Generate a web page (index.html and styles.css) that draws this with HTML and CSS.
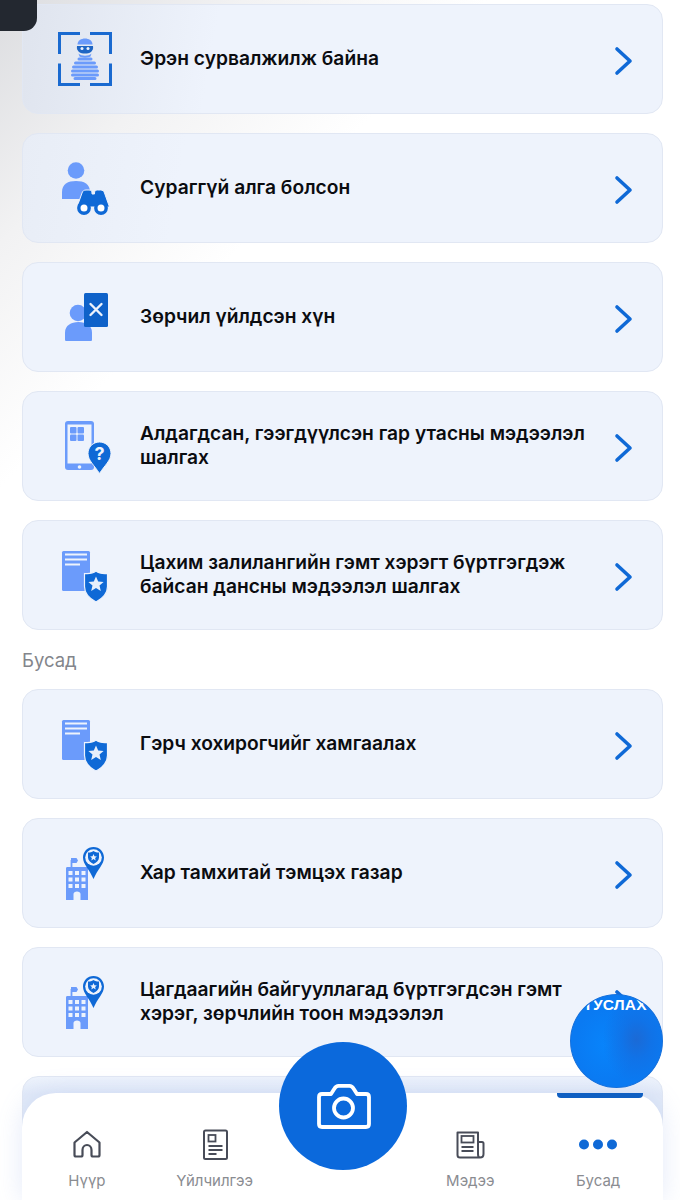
FILE: index.html
```html
<!DOCTYPE html>
<html>
<head>
    <title>Бусад</title>
    <meta charset="UTF-8">
    <link rel="stylesheet" href="styles.css">
</head>
<body>
    <svg class="defs" width="0" height="0">
        <symbol id="chevron" viewBox="0 0 20 30">
            <path d="M3 3 L16 15 L3 27" fill="none" stroke="#0f69d6" stroke-width="3.6" stroke-linecap="round" stroke-linejoin="round"/>
        </symbol>
        <symbol id="doc-shield" viewBox="0 0 56 56">
            <rect x="4" y="4" width="28" height="40" rx="1.500" fill="#6b9bfb"/>
            <path d="M7 7.500h22M7 12.500h22M7 17.500h15" stroke="#eef3fc" stroke-width="2"/>
            <path d="M38 24c2.500 2 6 3 11.500 2.500v13c0 7-5 12-11.500 15.500c-6.500-3.500-11.500-8.500-11.500-15.500v-13c5 .5 9-.5 11.500-2.500z" fill="#0f69d6" stroke="#eef3fc" stroke-width="1.200"/>
            <path d="M38 29.500l2.200 5 5.400 .5-4.100 3.600 1.300 5.400-4.800-2.900-4.800 2.900 1.300-5.400-4.100-3.600 5.400-.5z" fill="#e8effb"/>
        </symbol>
        <symbol id="building-pin" viewBox="0 0 56 56">
            <path d="M13.500 22v-7" stroke="#6b9bfb" stroke-width="1.800"/>
            <path d="M13 13h5.500l1.500 2.500-1.500 2.500h-5.500z" fill="#6b9bfb"/>
            <path d="M8 23.500c0-1 .5-1.500 1.500-1.500h19c1 0 1.500 .5 1.500 1.500V55h-7.500v-6c0-1.500-1.500-2.500-3.500-2.500s-3.500 1-3.500 2.500v6H8z" fill="#6b9bfb"/>
            <path d="M10.500 26h4v4h-4zM17 26h4v4h-4zM23.500 26h4v4h-4zM10.500 32.500h4v4h-4zM17 32.500h4v4h-4zM23.500 32.500h4v4h-4zM10.500 39h4v4h-4zM17 39h4v4h-4zM23.500 39h4v4h-4z" fill="#eef3fc"/>
            <path d="M35.500 2c6 0 10.500 4.800 10.500 10.500 0 7-6.500 12-10.500 21.500-4-9.500-10.500-14.500-10.500-21.500C25 6.800 29.500 2 35.500 2z" fill="#0f69d6"/>
            <circle cx="35.500" cy="12.500" r="8.300" fill="#eef3fc"/>
            <path d="M35.500 6c2 1.300 3.800 1.600 5.500 1.500v5c0 3-2.500 5-5.500 6.500-3-1.500-5.500-3.500-5.500-6.500v-5c1.700 .1 3.500-.2 5.500-1.500z" fill="#0f69d6"/>
            <path d="M35.500 9l1 2.200 2.400 .2-1.800 1.600 .6 2.400-2.200-1.300-2.200 1.300 .6-2.400-1.800-1.600 2.400-.2z" fill="#eef3fc"/>
        </symbol>
    </svg>

    <main class="content">
        <a class="card">
            <span class="card-icon">
                <svg width="56" height="56" viewBox="0 0 56 56">
                    <path d="M22 2.500H1.500V23M32 2.500h20.500V23M1.500 32.500V53.500H22M52.500 32.500V53.500H32" fill="none" stroke="#1a6ad0" stroke-width="3"/>
                    <path d="M19.500 13.500c0-8 15-8 15 0z" fill="#6b9bfb"/>
                    <path d="M19 15h16c.5 3-.5 4.500-2 6-3 2-9 2-12 0-1.500-1.500-2.500-3-2-6z" fill="#1f66c4"/>
                    <path d="M20.500 22.500c3 3 10 3 13 0l-1 3c-3 1.500-8 1.500-11 0z" fill="#6b9bfb"/>
                    <circle cx="24" cy="17.500" r="1.500" fill="#eef3fc"/>
                    <circle cx="30" cy="17.500" r="1.500" fill="#eef3fc"/>
                    <path d="M21 28h12M17.500 32h19M15.500 36h23M14.500 40h25M14.500 44h25M17 47.500h20" stroke="#6b9bfb" stroke-width="3" stroke-linecap="round"/>
                </svg>
            </span>
            <span class="card-title">Эрэн сурвалжилж байна</span>
            <svg class="chevron"><use href="#chevron"/></svg>
        </a>
        <a class="card">
            <span class="card-icon">
                <svg width="56" height="56" viewBox="0 0 56 56">
                    <circle cx="18" cy="10.500" r="8.300" fill="#6b9bfb"/>
                    <path d="M4 39v-7c0-8 6-11 14-11s14 3 14 11v7z" fill="#6b9bfb"/>
                    <path d="M19 47l5-14c.5-2 2-3 4-3h3c2 0 3 1 3 3v1h2.500v-1c0-2 1-3 3-3h3c2 0 3.500 1 4 3l5 14z" fill="#0f69d6" stroke="#eef3fc" stroke-width="1"/>
                    <circle cx="26" cy="48" r="5.200" fill="#fff" stroke="#0f69d6" stroke-width="3.400"/>
                    <circle cx="43" cy="48" r="5.200" fill="#fff" stroke="#0f69d6" stroke-width="3.400"/>
                </svg>
            </span>
            <span class="card-title">Сураггүй алга болсон</span>
            <svg class="chevron"><use href="#chevron"/></svg>
        </a>
        <a class="card">
            <span class="card-icon">
                <svg width="56" height="56" viewBox="0 0 56 56">
                    <circle cx="20" cy="24" r="8.300" fill="#6b9bfb"/>
                    <path d="M8.500 52c-1 0-1.500-.5-1.500-1.500v-7c0-7 6-10.500 13.500-10.500S34 36.500 34 43.500v7c0 1-.5 1.500-1.500 1.500z" fill="#6b9bfb"/>
                    <rect x="26" y="4" width="24" height="34" rx="1.500" fill="#0f62c9"/>
                    <path d="M32.500 15.500l11 11M43.500 15.500l-11 11" stroke="#eef3fc" stroke-width="2.400" stroke-linecap="round" transform="translate(0 -.5)"/>
                </svg>
            </span>
            <span class="card-title">Зөрчил үйлдсэн хүн</span>
            <svg class="chevron"><use href="#chevron"/></svg>
        </a>
        <a class="card">
            <span class="card-icon">
                <svg width="56" height="56" viewBox="0 0 56 56">
                    <rect x="7" y="3" width="29" height="49" rx="3" fill="#6b9bfb"/>
                    <rect x="9.500" y="6.500" width="24" height="39" fill="#eef3fc"/>
                    <rect x="12" y="9" width="6.500" height="6.500" rx="1" fill="#6b9bfb"/>
                    <rect x="19.500" y="9" width="6.500" height="6.500" rx="1" fill="#6b9bfb"/>
                    <rect x="12" y="16.500" width="6.500" height="6.500" rx="1" fill="#6b9bfb"/>
                    <rect x="19.500" y="16.500" width="6.500" height="6.500" rx="1" fill="#6b9bfb"/>
                    <circle cx="21.500" cy="49" r="1.800" fill="#eef3fc"/>
                    <path d="M41.500 24c6.500 0 11.500 5 11.500 11.500 0 7-6.500 12-11.500 20-5-8-11.500-13-11.500-20C30 29 35 24 41.500 24z" fill="#0f69d6" stroke="#eef3fc" stroke-width="1"/>
                    <text x="41.500" y="42" class="icon-mark">?</text>
                </svg>
            </span>
            <span class="card-title">Алдагдсан, гээгдүүлсэн гар утасны мэдээлэл шалгах</span>
            <svg class="chevron"><use href="#chevron"/></svg>
        </a>
        <a class="card">
            <span class="card-icon"><svg width="56" height="56"><use href="#doc-shield"/></svg></span>
            <span class="card-title">Цахим залилангийн гэмт хэрэгт бүртгэгдэж байсан дансны мэдээлэл шалгах</span>
            <svg class="chevron"><use href="#chevron"/></svg>
        </a>

        <div class="section-label">Бусад</div>

        <a class="card">
            <span class="card-icon"><svg width="56" height="56"><use href="#doc-shield"/></svg></span>
            <span class="card-title">Гэрч хохирогчийг хамгаалах</span>
            <svg class="chevron"><use href="#chevron"/></svg>
        </a>
        <a class="card">
            <span class="card-icon"><svg width="56" height="56"><use href="#building-pin"/></svg></span>
            <span class="card-title">Хар тамхитай тэмцэх газар</span>
            <svg class="chevron"><use href="#chevron"/></svg>
        </a>
        <a class="card">
            <span class="card-icon"><svg width="56" height="56"><use href="#building-pin"/></svg></span>
            <span class="card-title">Цагдаагийн байгууллагад бүртгэгдсэн гэмт хэрэг, зөрчлийн тоон мэдээлэл</span>
            <svg class="chevron"><use href="#chevron"/></svg>
        </a>
        <a class="card card-behind"></a>
    </main>

    <div class="corner"></div>

    <nav class="tabbar">
        <div class="tab-marker"></div>
        <a class="tab">
            <svg width="32" height="32" viewBox="0 0 32 32">
                <path d="M3.500 26V13.500L16 3l12.500 10.500V26c0 1-.5 1.500-1.500 1.500h-5c-1 0-1.500-.5-1.500-1.500v-5c0-3-2-5-4.500-5s-4.500 2-4.500 5v5c0 1-.5 1.500-1.500 1.500H5c-1 0-1.500-.5-1.500-1.500z" fill="none" stroke="#484c58" stroke-width="2.200" stroke-linejoin="round"/>
            </svg>
            <span>Нүүр</span>
        </a>
        <a class="tab">
            <svg width="32" height="32" viewBox="0 0 32 32">
                <rect x="5" y="1.500" width="23" height="28.500" rx="1.500" fill="none" stroke="#484c58" stroke-width="2"/>
                <rect x="9.500" y="6" width="7" height="6.500" fill="none" stroke="#484c58" stroke-width="1.800"/>
                <path d="M9.500 17h14M9.500 21h14M9.500 25h8" stroke="#484c58" stroke-width="1.800"/>
            </svg>
            <span>Үйлчилгээ</span>
        </a>
        <div class="tab tab-gap"></div>
        <a class="tab">
            <svg width="32" height="32" viewBox="0 0 32 32">
                <path d="M24 13h4c1 0 1.500 .5 1.500 1.500V25c0 2-1.500 3.500-3.500 3.500H6c-1.500 0-2.500-1-2.500-2.500V3.500H24V25c0 2 .5 3.500 2 3.500" fill="none" stroke="#484c58" stroke-width="2" stroke-linejoin="round"/>
                <rect x="7.500" y="7" width="12" height="6.500" fill="none" stroke="#484c58" stroke-width="1.800"/>
                <path d="M7.500 18h12M7.500 22h12" stroke="#484c58" stroke-width="1.800"/>
            </svg>
            <span>Мэдээ</span>
        </a>
        <a class="tab">
            <svg width="40" height="32" viewBox="0 0 40 32">
                <circle cx="6" cy="15.500" r="5" fill="#0f69d6"/>
                <circle cx="20" cy="15.500" r="5" fill="#0f69d6"/>
                <circle cx="34" cy="15.500" r="5" fill="#0f69d6"/>
            </svg>
            <span>Бусад</span>
        </a>
    </nav>

    <button class="camera-btn">
        <svg width="56" height="48" viewBox="0 0 56 48">
            <path d="M7 12h9l3.500-5.500c1-1.700 2-2.600 4-2.600h11c2 0 3 .9 4 2.600L42 12h9c2 0 3 1 3 3v27c0 2-1 3-3 3H7c-2 0-3-1-3-3V15c0-2 1-3 3-3z" fill="none" stroke="#fff" stroke-width="3.800" stroke-linejoin="round"/>
            <circle cx="28.500" cy="26" r="9.500" fill="none" stroke="#fff" stroke-width="3.800"/>
        </svg>
    </button>

    <div class="help-ball"><span>ТУСЛАХ</span></div>
</body>
</html>
```

FILE: styles.css
```css
* { box-sizing: border-box; }
html, body { margin: 0; height: 1200px; overflow: hidden; }
body {
    position: relative;
    font-family: Inter, "Noto Sans", sans-serif;
    background: linear-gradient(135deg, #dcdde0 0, #f2f2f3 13%, #ffffff 26%);
}
.defs { position: absolute; }

.corner {
    position: absolute;
    left: 0;
    top: 0;
    width: 37px;
    height: 31px;
    background: #232830;
    border-radius: 0 0 13px 0;
}

.content { padding: 4px 17px 0 22px; display: flex; flex-direction: column; gap: 19px; }

.card {
    height: 110px;
    flex: none;
    display: flex;
    align-items: center;
    padding: 0 30px 0 35px;
    background: #eef3fc;
    border: 1px solid #e1e7f3;
    border-radius: 16px;
}
.card:first-child { background: linear-gradient(100deg, #dfe4ee 0, #eef3fc 30%); }
.card:nth-child(2) { background: linear-gradient(100deg, #e8edf6 0, #eef3fc 25%); }
.card-behind { background: linear-gradient(#eef3fc, #e2eaf8 16%); }

.card-icon { width: 56px; height: 56px; flex: none; margin-right: 26px; }
.card-icon svg { display: block; }
.card-title {
    flex: 1;
    font-size: 19.200px;
    line-height: 24px;
    font-weight: 600;
    color: #0b0c10;
    padding: 0 16px 2px 0;
}
.chevron { width: 20px; height: 30px; flex: none; margin: 4px -2px 0 1px; }
.icon-mark { font-size: 18px; font-weight: 700; fill: #eef3fc; text-anchor: middle; }

.section-label { font-size: 18.500px; line-height: 22px; color: #83858b; margin-bottom: -1px; }

.tabbar {
    position: absolute;
    left: 22px;
    top: 1093px;
    width: 641px;
    height: 107px;
    background: #fff;
    border-radius: 34px 34px 0 0;
    box-shadow: 0 0 26px rgba(120, 150, 225, 0.2);
    display: flex;
    padding: 0 1px;
}
.tab {
    flex: 1;
    display: flex;
    flex-direction: column;
    align-items: center;
    padding-top: 36px;
    font-size: 15px;
    line-height: 20px;
    color: #8a8c91;
    gap: 10px;
}
.tab svg { display: block; }
.tab-marker {
    position: absolute;
    left: 535px;
    top: 0;
    width: 86px;
    height: 5px;
    background: #0f5fc2;
    border-radius: 0 0 4px 4px;
}

.camera-btn {
    position: absolute;
    left: 279px;
    top: 1042px;
    width: 128px;
    height: 128px;
    border: none;
    border-radius: 50%;
    background: #0b69dc;
    display: flex;
    align-items: center;
    justify-content: center;
    padding: 0;
}

.help-ball {
    position: absolute;
    left: 570px;
    top: 994px;
    width: 93px;
    height: 94px;
    border-radius: 50%;
    border: 1px solid #1570dc;
    overflow: hidden;
    background: radial-gradient(ellipse 34px 44px at 72% 48%, #1b6ad6 0, rgba(20, 110, 225, 0.6) 45%, rgba(10, 122, 242, 0) 100%), radial-gradient(ellipse 30px 38px at 38% 54%, #0884fb 0, #0a7af2 100%);
    text-align: center;
    color: #fff;
    font: 700 15.500px/16px "Liberation Sans", sans-serif;
    letter-spacing: 0.2px;
    padding: 2px 3px 0 0;
    white-space: nowrap;
}
```
